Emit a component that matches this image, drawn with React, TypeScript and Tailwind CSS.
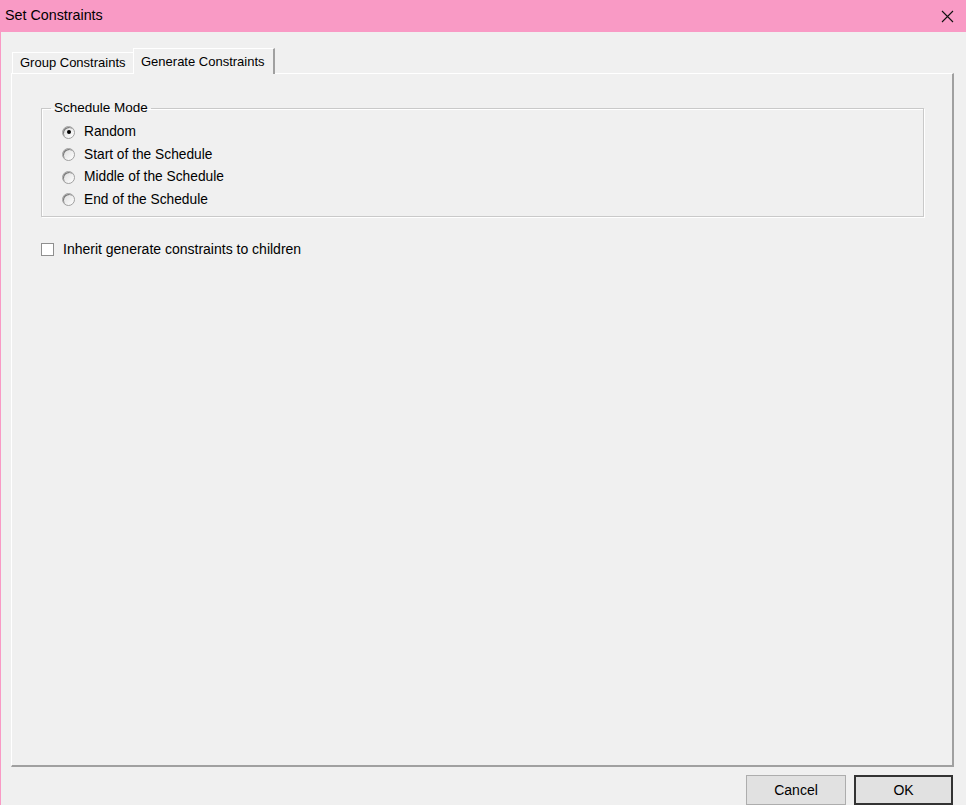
import React from "react";

const font = { fontFamily: '"Liberation Sans", Arial, sans-serif' };

function Radio({ checked, label }: { checked?: boolean; label: string }) {
  return (
    <div className="flex items-center h-[22.5px]">
      <div className="ml-[20px] w-[13px] h-[13px] rounded-full border border-[#a0a0a0] bg-[linear-gradient(135deg,#dcdcdc,#ffffff)] flex items-center justify-center shadow-[inset_1px_1px_0_#7a7a7a]">
        {checked && <div className="w-[4px] h-[4px] rounded-full bg-black" />}
      </div>
      <span className="ml-[9px] text-[13.75px] text-black leading-none">{label}</span>
    </div>
  );
}

export default function App() {
  return (
    <div className="w-[966px] h-[805px] bg-[#f0f0f0] border-l border-[#f99ac5] flex flex-col overflow-hidden" style={font}>
      <div className="h-[32px] bg-[#f99ac5] flex items-center justify-between pl-[4px] pr-[12px] shrink-0">
        <span className="text-[14.3px] text-black">Set Constraints</span>
        <svg width="13" height="13" viewBox="0 0 13 13" className="mt-[1px]">
          <path d="M1 1 L12 12 M12 1 L1 12" stroke="#111" strokeWidth="1.1" />
        </svg>
      </div>
      <div className="flex flex-col pl-[10px] pr-[12px] pt-[16px]">
        <div className="flex items-end h-[25px] pl-[1px] relative z-10">
          <div className="h-[21px] px-[7px] flex items-center border-t border-l border-white text-[13px] text-black bg-[#f0f0f0] w-[121px] whitespace-nowrap">
            Group Constraints
          </div>
          <div className="h-[26px] mb-[-1px] w-[142px] flex items-start pt-[3px] px-[7px] border-t border-l border-white border-r-2 border-r-[#a0a0a0] text-[13px] text-black bg-[#f0f0f0] whitespace-nowrap">
            Generate Constraints
          </div>
        </div>
        <div className="h-[694px] border-t border-l border-white border-r-2 border-b-2 border-r-[#a0a0a0] border-b-[#a0a0a0] pl-[29px] pr-[28px] pt-[27px]">
          <fieldset className="border border-[#c9c9c9] shadow-[inset_1px_1px_0_#ffffff,1px_1px_0_#ffffff] h-[116px] pl-[0px] pt-[4px]">
            <legend className="ml-[9px] px-[3px] text-[13.5px] text-black leading-[14px]">Schedule Mode</legend>
            <div className="flex flex-col mt-[2px]">
              <Radio checked label="Random" />
              <Radio label="Start of the Schedule" />
              <Radio label="Middle of the Schedule" />
              <Radio label="End of the Schedule" />
            </div>
          </fieldset>
          <div className="flex items-center mt-[22px]">
            <div className="w-[13px] h-[13px] border border-[#8f8f8f] bg-white" />
            <span className="ml-[9px] text-[14px] text-black">Inherit generate constraints to children</span>
          </div>
        </div>
        <div className="flex justify-end gap-[8px] mt-[8px] pr-[1px]">
          <button className="w-[100px] h-[30px] border border-[#adadad] bg-[#e1e1e1] text-[14px] text-black" style={font}>
            Cancel
          </button>
          <button className="w-[99px] h-[30px] border-2 border-[#333] bg-[#e1e1e1] text-[14px] text-black" style={font}>
            OK
          </button>
        </div>
      </div>
    </div>
  );
}
